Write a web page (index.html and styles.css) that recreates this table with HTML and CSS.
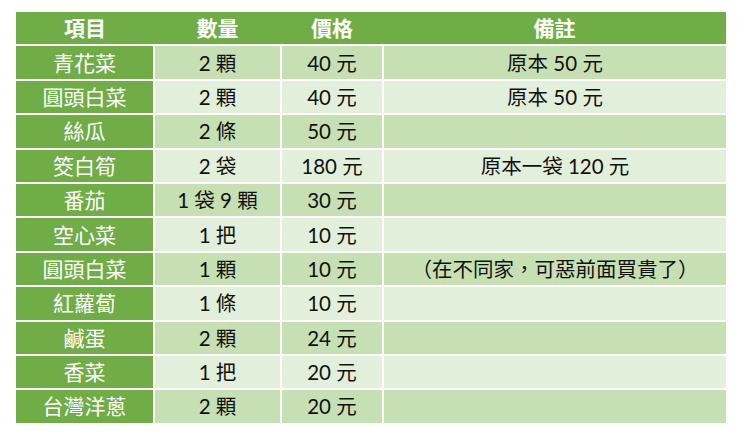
FILE: index.html
```html
<!DOCTYPE html>
<html lang="zh-Hant">
<head>
<meta charset="utf-8">
<link rel="stylesheet" href="styles.css">
</head>
<body>
<table class="list">
  <colgroup>
    <col class="c1"><col class="c2"><col class="c3"><col class="c4">
  </colgroup>
  <thead>
    <tr><th>項目</th><th>數量</th><th>價格</th><th>備註</th></tr>
  </thead>
  <tbody>
    <tr><th>青花菜</th><td>2 顆</td><td>40 元</td><td>原本 50 元</td></tr>
    <tr><th>圓頭白菜</th><td>2 顆</td><td>40 元</td><td>原本 50 元</td></tr>
    <tr><th>絲瓜</th><td>2 條</td><td>50 元</td><td></td></tr>
    <tr><th>筊白筍</th><td>2 袋</td><td>180 元</td><td>原本一袋 120 元</td></tr>
    <tr><th>番茄</th><td>1 袋 9 顆</td><td>30 元</td><td></td></tr>
    <tr><th>空心菜</th><td>1 把</td><td>10 元</td><td></td></tr>
    <tr><th>圓頭白菜</th><td>1 顆</td><td>10 元</td><td>（在不同家，可惡前面買貴了）</td></tr>
    <tr><th>紅蘿蔔</th><td>1 條</td><td>10 元</td><td></td></tr>
    <tr><th>鹹蛋</th><td>2 顆</td><td>24 元</td><td></td></tr>
    <tr><th>香菜</th><td>1 把</td><td>20 元</td><td></td></tr>
    <tr><th>台灣洋蔥</th><td>2 顆</td><td>20 元</td><td></td></tr>
  </tbody>
</table>
</body>
</html>
```
FILE: styles.css
```css
html, body {
  margin: 0;
  padding: 0;
  background: #ffffff;
}
body {
  padding: 12px 0 0 16px;
  font-family: "Lato", "Noto Sans CJK TC", sans-serif;
}
.list {
  border-collapse: collapse;
  table-layout: fixed;
  width: 710px;
}
.c1 { width: 138px; }
.c2 { width: 127px; }
.c3 { width: 102px; }
.c4 { width: 343px; }
.list th, .list td {
  height: 32.4px;
  padding: 0;
  text-align: center;
  vertical-align: middle;
  font-size: 20.5px;
  line-height: 30px;
  border: 2px solid #ffffff;
}
.list thead th {
  background: #70ad47;
  color: #ffffff;
  font-weight: 700;
  font-size: 21px;
  border-top: none;
  border-left: none;
  border-right: none;
  border-bottom: 2px solid #ffffff;
}
.list tbody th {
  background: #70ad47;
  color: #ffffff;
  font-weight: 400;
  font-size: 21px;
  border-left: none;
}
.list tbody td {
  color: #111111;
}
.list tbody td:last-child { border-right: none; }
.list tbody tr:last-child th,
.list tbody tr:last-child td { border-bottom: none; }
.list tbody tr:nth-child(odd) td { background: #c6e0b4; }
.list tbody tr:nth-child(even) td { background: #e2efda; }
```
